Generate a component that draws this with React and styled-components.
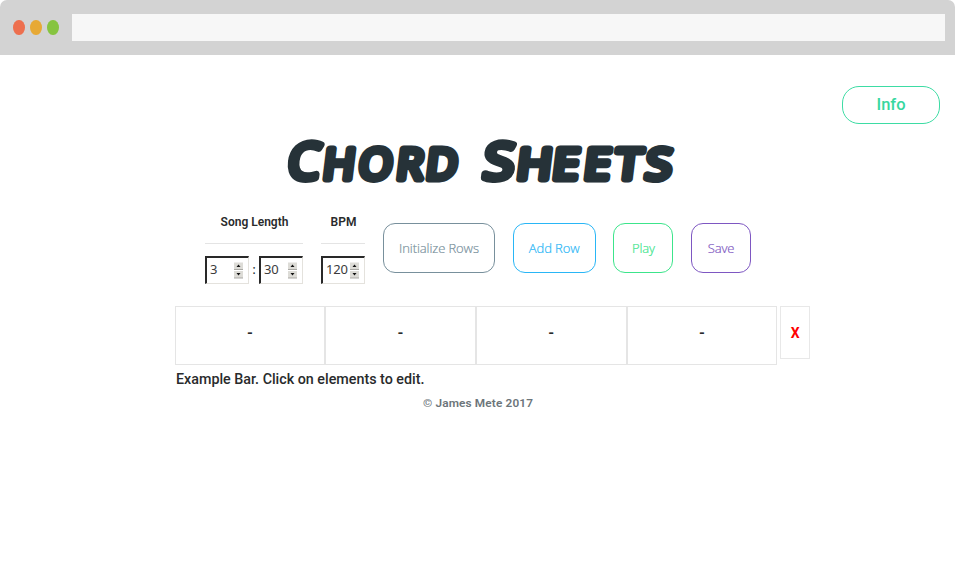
import React from "react";
import styled, { createGlobalStyle } from "styled-components";

const GlobalStyle = createGlobalStyle`
  * { box-sizing: border-box; }
  body { margin: 0; background: #fff; color: #263238; font-family: Roboto, sans-serif; overflow: hidden; }
`;

const Page = styled.div`
  display: flex;
  flex-direction: column;
  height: 579px;
`;

const BrowserBar = styled.header`
  display: flex;
  align-items: center;
  height: 55px;
  padding: 0 10px 0 13px;
  background: #d3d3d3;
  border-radius: 7px 7px 0 0;
`;

const Dots = styled.div`
  display: flex;
  gap: 5.7px;
  width: 59px;
`;

const Dot = styled.span`
  width: 11.5px;
  height: 15px;
  border-radius: 50%;
  background: ${(p) => p.$color};
`;

const Address = styled.div`
  flex: 1;
  height: 27px;
  background: #f7f7f7;
`;

const InfoRow = styled.div`
  display: flex;
  justify-content: flex-end;
  padding: 31px 15px 0 0;
`;

const InfoButton = styled.button`
  width: 98px;
  height: 38px;
  padding: 0 0 2px;
  border: 1px solid #3ddca4;
  border-radius: 17px;
  background: #fff;
  color: #37d79f;
  font: 500 16.5px Roboto, sans-serif;
`;

const Title = styled.h1`
  display: flex;
  justify-content: center;
  height: 78px;
  margin: 0;
`;

const Lettering = styled.svg`
  width: 400px;
  height: 70px;
  overflow: visible;
`;

const MarkerText = styled.text`
  fill: #263238;
  stroke: #263238;
  stroke-width: 7px;
  stroke-linejoin: round;
  stroke-linecap: round;
  font-family: "Open Sans", sans-serif;
  font-weight: 400;
  font-size: 50px;
`;

const SmallLetters = styled.tspan`
  font-size: 42px;
`;

const Controls = styled.section`
  display: flex;
  gap: 18px;
  height: 104px;
  padding-left: 205px;
`;

const Field = styled.div`
  width: ${(p) => p.$width}px;
`;

const Label = styled.div`
  height: 42px;
  padding: 12px 0 0 1px;
  border-bottom: 1px solid #e4e4e4;
  color: #292b2c;
  font: 600 12px/16px Roboto, sans-serif;
  text-align: center;
`;

const Inputs = styled.div`
  display: flex;
  align-items: center;
  justify-content: space-between;
  margin-top: 12px;
  font: 500 12px Roboto, sans-serif;
`;

const NumberBox = styled.div`
  display: flex;
  align-items: center;
  justify-content: space-between;
  width: 44px;
  height: 28px;
  padding: 0 5px 0 3px;
  border: solid;
  border-width: 2px 1px 1px 2px;
  border-color: #292929 #e4e2dd #e4e2dd #292929;
  color: #3b3b3b;
  font: 400 13px "Noto Sans", sans-serif;
  letter-spacing: -0.2px;
`;

const NumberValue = styled.span`
  padding-bottom: 3px;
`;

const Actions = styled.div`
  display: flex;
  gap: 17.7px;
  padding-top: 21px;
`;

const ActionButton = styled.button`
  width: ${(p) => p.$width}px;
  height: 50px;
  padding: 0;
  border: 1px solid ${(p) => p.$color};
  border-radius: 12px;
  background: #fff;
  color: ${(p) => p.$color};
  font: 300 13px "Open Sans", sans-serif;
  letter-spacing: -0.1px;
  -webkit-text-stroke: 0.2px ${(p) => p.$color};
  white-space: nowrap;
`;

const SheetRow = styled.section`
  display: flex;
  gap: 3px;
  height: 59px;
  margin-left: 174.5px;
`;

const Bars = styled.div`
  display: grid;
  grid-template-columns: repeat(4, 150.7px);
`;

const Bar = styled.div`
  display: flex;
  align-items: center;
  justify-content: center;
  padding-bottom: 6px;
  border: 1px solid #e5e5e5;
  color: #292b2c;
  font: 700 15px Roboto, sans-serif;
`;

const RemoveButton = styled.button`
  width: 30px;
  height: 53px;
  padding: 0;
  border: 1px solid #e8e8e8;
  background: #fff;
  color: #f00;
  font: 700 14px Roboto, sans-serif;
`;

const Caption = styled.p`
  margin: 4px 0 0 176px;
  color: #292b2c;
  font: 500 14.3px/20px Roboto, sans-serif;
  white-space: nowrap;
`;

const Footer = styled.footer`
  margin: 5px 0 0 1px;
  color: #6c757a;
  font: 600 11.8px/18px Roboto, sans-serif;
  letter-spacing: 0.15px;
  text-align: center;
`;

const Stepper = () => (
  <svg width="9" height="17" viewBox="0 0 9 17" aria-hidden="true">
    <path d="M0 .5h9v7H0zM0 9h9v7H0z" fill="#dddcd7" />
    <path d="M0 7.5h9M0 16h9" stroke="#aaa9a5" strokeWidth="1" />
    <path d="M2.5 5 4.5 2.5 6.5 5zM2.5 11 4.5 13.5 6.5 11z" fill="#111" />
  </svg>
);

const NumberInput = ({ value }) => (
  <NumberBox>
    <NumberValue>{value}</NumberValue>
    <Stepper />
  </NumberBox>
);

const actions = [
  { label: "Initialize Rows", color: "#78909c", width: 112 },
  { label: "Add Row", color: "#29b6f6", width: 83 },
  { label: "Play", color: "#3ce58b", width: 60 },
  { label: "Save", color: "#7e57c2", width: 60 },
];

export default function App() {
  return (
    <Page>
      <GlobalStyle />
      <BrowserBar>
        <Dots>
          <Dot $color="#ed6f4e" />
          <Dot $color="#e7a935" />
          <Dot $color="#86c440" />
        </Dots>
        <Address />
      </BrowserBar>
      <InfoRow>
        <InfoButton>Info</InfoButton>
      </InfoRow>
      <Title>
        <Lettering viewBox="0 0 400 70">
          <g transform="translate(0 55) skewX(-7)">
            <MarkerText x="8" transform="scale(1.02 1)">
              C<SmallLetters x="43 78 115 144">HORD</SmallLetters>
            </MarkerText>
            <MarkerText x="182" transform="scale(1.12 1)">
              S<SmallLetters x="212 244 272 300 327">HEETS</SmallLetters>
            </MarkerText>
          </g>
        </Lettering>
      </Title>
      <Controls>
        <Field $width={98}>
          <Label>Song Length</Label>
          <Inputs>
            <NumberInput value="3" />
            <span>:</span>
            <NumberInput value="30" />
          </Inputs>
        </Field>
        <Field $width={44}>
          <Label>BPM</Label>
          <Inputs>
            <NumberInput value="120" />
          </Inputs>
        </Field>
        <Actions>
          {actions.map((a) => (
            <ActionButton key={a.label} $color={a.color} $width={a.width}>
              {a.label}
            </ActionButton>
          ))}
        </Actions>
      </Controls>
      <SheetRow>
        <Bars>
          {[1, 2, 3, 4].map((n) => (
            <Bar key={n}>-</Bar>
          ))}
        </Bars>
        <RemoveButton>X</RemoveButton>
      </SheetRow>
      <Caption>Example Bar. Click on elements to edit.</Caption>
      <Footer>© James Mete 2017</Footer>
    </Page>
  );
}
